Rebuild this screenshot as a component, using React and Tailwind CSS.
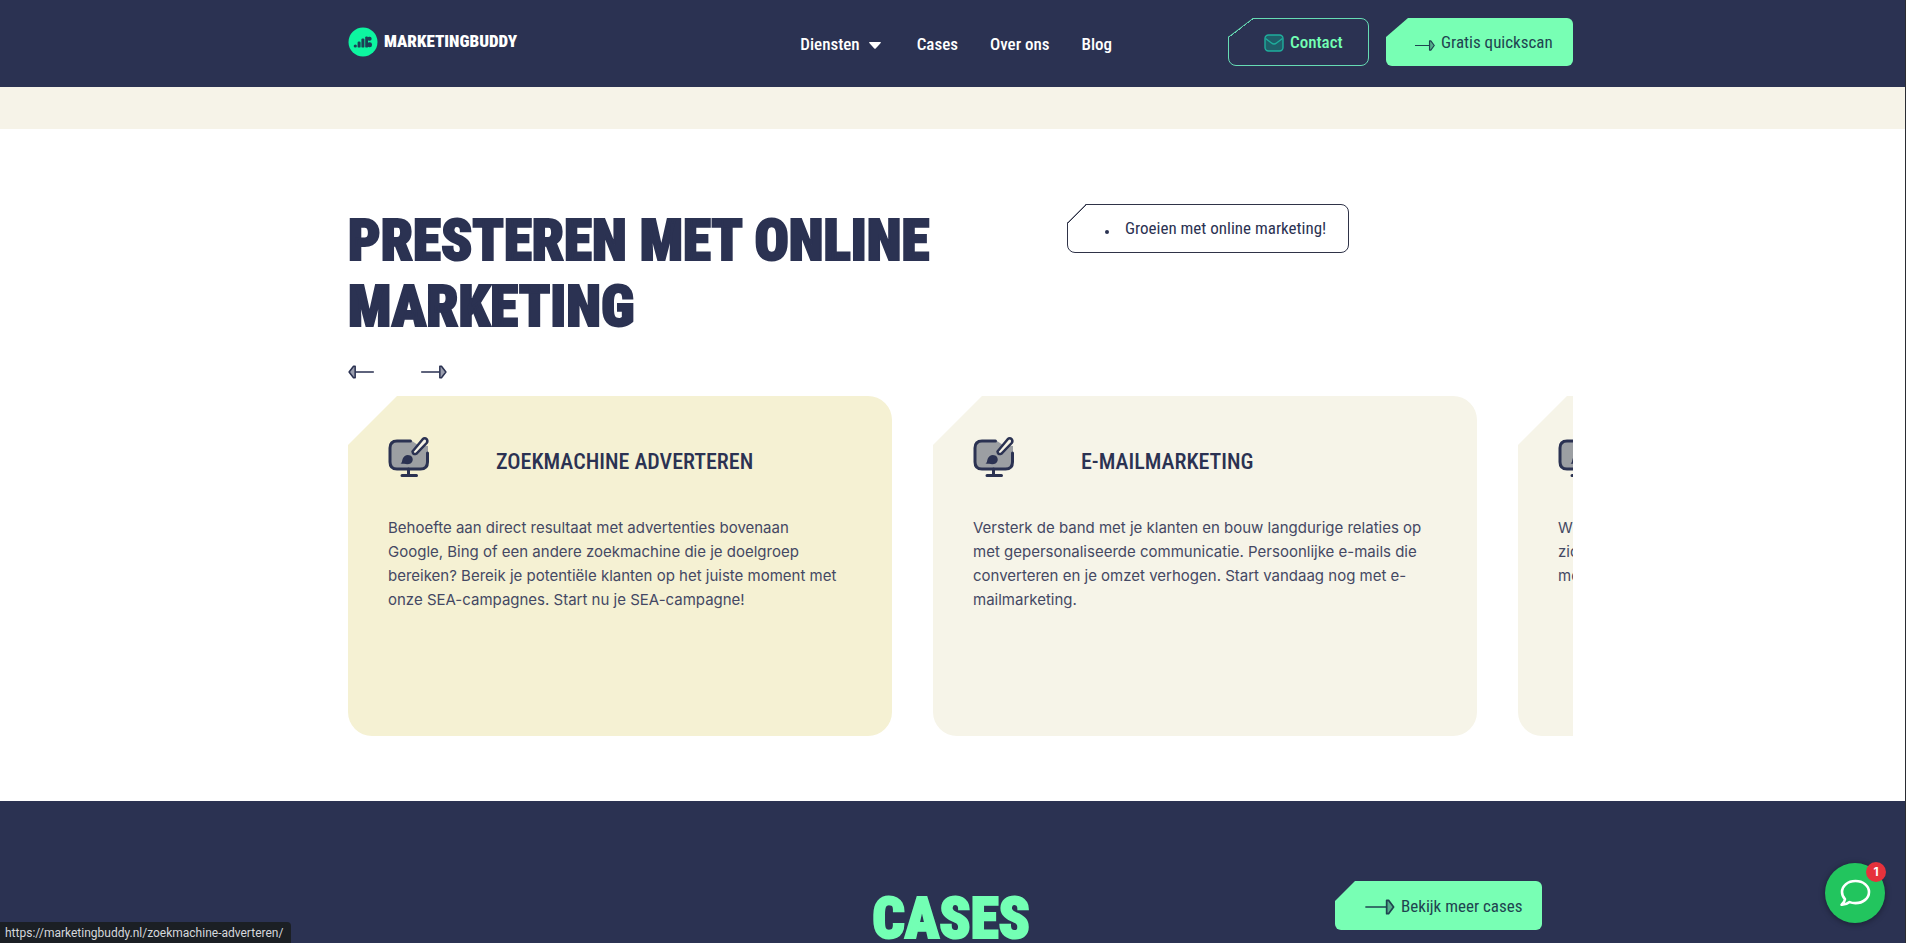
import React from "react";

const NAV = ["Cases", "Over ons", "Blog"];

const CARDS = [
  {
    title: "Zoekmachine adverteren",
    text: "Behoefte aan direct resultaat met advertenties bovenaan\nGoogle, Bing of een andere zoekmachine die je doelgroep\nbereiken? Bereik je potentiële klanten op het juiste moment met\nonze SEA-campagnes. Start nu je SEA-campagne!",
    href: "/zoekmachine-adverteren/",
    active: true,
  },
  {
    title: "E-mailmarketing",
    text: "Versterk de band met je klanten en bouw langdurige relaties op\nmet gepersonaliseerde communicatie. Persoonlijke e-mails die\nconverteren en je omzet verhogen. Start vandaag nog met e-\nmailmarketing.",
    href: "/e-mailmarketing/",
    active: false,
  },
  {
    title: "Webdesign",
    text: "Wij bouwen websites waarmee jouw bedrijf goed\nzichtbaar is en bezoekers klant worden,\nmet meetbaar resultaat.",
    href: "/webdesign/",
    active: false,
  },
];

function Container({ className = "", children }) {
  return (
    <div className="pl-4">
      <div className={"mx-auto w-full max-w-[1225px] " + className}>{children}</div>
    </div>
  );
}

function Arrow({ className = "", fill = "#9a9eae" }) {
  return (
    <svg viewBox="0 0 22 12" className={className} fill="none" stroke="currentColor" strokeWidth="1.3" strokeLinejoin="round" aria-hidden="true">
      <path d="M0 6h16" />
      <path d="M16 1v10h1.400l3.800-5-3.800-5z" fill={fill} />
    </svg>
  );
}

function LogoMark() {
  return (
    <svg viewBox="0 0 30 30" className="size-[30px]" aria-hidden="true">
      <circle cx="15" cy="15" r="14.5" fill="#0df5a0" />
      <g fill="#1c3f55">
        <circle cx="7.3" cy="19" r="1.6" />
        <rect x="9.6" y="14.6" width="3" height="6" rx="1.2" />
        <rect x="13.4" y="11.4" width="3" height="9.2" rx="1.2" />
        <rect x="17.2" y="9.4" width="2.8" height="11.2" rx="1.2" />
        <rect x="19.2" y="9.8" width="4.4" height="4" rx="1.8" />
        <rect x="19.2" y="15.2" width="4.8" height="5" rx="2.2" />
      </g>
    </svg>
  );
}

function MailIcon() {
  return (
    <svg viewBox="0 0 20 18" className="h-[18px] w-5" fill="none" stroke="#1fae9d" strokeWidth="1.4" aria-hidden="true">
      <rect x="1" y="1" width="18" height="16" rx="3.5" fill="#1f5f69" />
      <path d="M1.5 4.5 7.5 9a4 4 0 0 0 5 0l6-4.5" />
    </svg>
  );
}

function MonitorBrush() {
  return (
    <svg viewBox="0 0 42 42" className="size-[42px] shrink-0" fill="none" stroke="#2b3252" strokeWidth="3" strokeLinecap="round" strokeLinejoin="round" aria-hidden="true">
      <path d="M24 5H8.5Q2 5 2 11.5v14Q2 33 8.5 33h25q6.500 0 6.500-7.500V10L30 9z" fill="#9c9fa3" stroke="none" />
      <path d="M22.500 5H9Q2 5 2 12v14q0 7 7 7h23.500q7 0 7-7V17" />
      <path d="M20.500 33v6.500M14 39.500h14.500" />
      <path d="M24.500 15.500 34.700 3.200q2-2 4 0 1.400 1.800 0 3.800L28.500 17.600q-3.500 1.500-4-2.100z" fill="#f6f3e6" strokeWidth="2.500" />
      <path d="M12.500 27.500c1.700-.6 1.400-2.500 2.200-4.700 1.300-3.500 4.800-4.700 7.600-3.200 3.400 2 3.100 6.100.2 7.900-1.800 1-4.800.7-10 0z" fill="#2b3252" stroke="none" />
    </svg>
  );
}

function ServiceCard({ card }) {
  return (
    <article
      className={
        "h-[340px] w-[544px] shrink-0 rounded-3xl pl-10 pr-5 pt-10 [clip-path:polygon(49px_0,100%_0,100%_100%,0_100%,0_49px)] " +
        (card.active ? "bg-[#f5f1d3]" : "bg-[#f6f4e8]")
      }
    >
      <a href={card.href} className="block">
        <div className="flex h-[52px] items-start">
          <MonitorBrush />
          <h3 className="ml-[66px] mt-[10px] font-['Roboto_Condensed','Roboto',sans-serif] text-[22px] font-medium uppercase leading-8 text-[#2b3252]">
            {card.title}
          </h3>
        </div>
        <p className="mt-7 whitespace-pre-line font-['Inter',sans-serif] text-[15px] leading-6 text-[#444863]">{card.text}</p>
      </a>
    </article>
  );
}

export default function App() {
  return (
    <div className="relative h-screen overflow-hidden border-r border-[#2b2d33] bg-white font-['Roboto_Condensed','Roboto',sans-serif] text-[#2b3252]">
      <header className="bg-[#2b3252]">
        <Container className="flex h-[87px] items-center pb-[3px]">
          <a href="/" className="flex items-center gap-[6px] text-[17px] font-black text-white">
            <LogoMark />
            MARKETINGBUDDY
          </a>
          <nav className="ml-auto mr-[116px] flex items-center gap-8 pt-1.5 text-[17px] font-medium text-white">
            <a href="/diensten/" className="flex items-center gap-[9px] pr-1">
              Diensten
              <svg viewBox="0 0 12 7" className="h-[7px] w-3" fill="currentColor" aria-hidden="true">
                <path d="M.6 0h10.800q.8.300.3 1L6.700 6.500q-.7.600-1.400 0L.3 1Q-.2.300.6 0z" />
              </svg>
            </a>
            {NAV.map((item) => (
              <a key={item} href={"/" + item.toLowerCase().replace(" ", "-") + "/"}>
                {item}
              </a>
            ))}
          </nav>
          <div className="flex gap-[17px] text-[17px]">
            <a
              href="/contact/"
              className="relative flex h-12 w-[141px] items-center gap-1.5 rounded-lg border border-[#66dcb4] pl-[35px] pt-0.5 font-medium text-[#73ffb4] [clip-path:polygon(25px_0,100%_0,100%_100%,0_100%,0_19px)] before:absolute before:-left-px before:-top-px before:h-[19px] before:w-[25px] before:bg-[linear-gradient(to_bottom_right,transparent_calc(50%-1px),#66dcb4_calc(50%-1px),#66dcb4_calc(50%+1px),transparent_calc(50%+1px))]"
            >
              <MailIcon />
              Contact
            </a>
            <a
              href="/quickscan/"
              className="flex h-12 w-[187px] items-center gap-1.5 rounded-md bg-[#78ffb4] pl-[29px] pt-0.5 text-[#1f4450] [clip-path:polygon(22px_0,100%_0,100%_100%,0_100%,0_19px)]"
            >
              <Arrow className="mt-1 h-[11px] w-5" fill="#54ad8a" />
              Gratis quickscan
            </a>
          </div>
        </Container>
      </header>

      <div className="h-[42px] bg-[#f6f3e8]" />

      <main>
        <Container>
          <section className="h-[672px] pt-[75px]">
            <div className="flex items-start">
              <h1 className="w-[719px] pt-1 text-[57px] font-black uppercase leading-[66px] [-webkit-text-stroke:2px_#2b3252]">
                Presteren met online
                <br />
                marketing
              </h1>
              <ul className="relative flex h-[49px] w-[282px] items-center rounded-lg border border-[#2f3348] pl-[37px] text-[17px] [clip-path:polygon(19px_0,100%_0,100%_100%,0_100%,0_19px)] before:absolute before:-left-px before:-top-px before:h-[19px] before:w-[19px] before:bg-[linear-gradient(to_bottom_right,transparent_calc(50%-1px),#2f3348_calc(50%-1px),#2f3348_calc(50%+1px),transparent_calc(50%+1px))]">
                <li className="flex items-center gap-4">
                  <span className="mt-1.5 size-1 rounded-full bg-[#2b3252]" />
                  Groeien met online marketing!
                </li>
              </ul>
            </div>
            <div className="mt-5 flex gap-[47px]">
              <button type="button" aria-label="Vorige" className="flex h-6 items-center">
                <Arrow className="h-[14px] w-[26px] rotate-180" />
              </button>
              <button type="button" aria-label="Volgende" className="flex h-6 items-center">
                <Arrow className="h-[14px] w-[26px]" />
              </button>
            </div>
            <div className="mt-3 flex gap-[41px] overflow-hidden">
              {CARDS.map((card) => (
                <ServiceCard key={card.title} card={card} />
              ))}
            </div>
          </section>
        </Container>

        <section className="h-[142px] bg-[#2b3252]">
          <Container className="flex items-start justify-end pr-[31px] pt-20">
            <h2 className="mr-[305px] mt-[10px] text-[57px] font-black uppercase leading-[56px] text-[#73ffb4] [-webkit-text-stroke:2px_#73ffb4]">
              Cases
            </h2>
            <a
              href="/cases/"
              className="flex h-[49px] w-[207px] items-center gap-1.5 rounded-md bg-[#78ffb4] pl-[30px] pt-0.5 text-[17px] text-[#1f4450] [clip-path:polygon(20px_0,100%_0,100%_100%,0_100%,0_20px)]"
            >
              <Arrow className="h-4 w-[30px]" fill="#54ad8a" />
              Bekijk meer cases
            </a>
          </Container>
        </section>
      </main>

      <button
        type="button"
        aria-label="Chat"
        className="absolute bottom-5 right-5 flex size-[60px] items-center justify-center rounded-full bg-[#22c55e] shadow-[0_1px_6px_rgba(0,0,0,0.4)]"
      >
        <svg viewBox="0 0 32 28" className="h-7 w-8" fill="none" stroke="white" strokeWidth="2.600" strokeLinejoin="round" aria-hidden="true">
          <path d="M16.500 2C8.800 2 3 6.800 3 13c0 2.800 1.100 5.200 3 7.100-.3 2.400-1.700 4.200-3.400 5.700 3.200.1 6-1 8-2.700 1.800.7 3.800 1 5.900 1C24.200 24.100 30 19.200 30 13S24.200 2 16.500 2z" />
        </svg>
        <span className="absolute -right-px -top-px flex size-5 items-center justify-center rounded-full bg-[#e6323c] font-['Inter',sans-serif] text-xs font-bold text-white">
          1
        </span>
      </button>

      <div className="absolute bottom-0 left-0 h-[21px] rounded-tr bg-[#1b1f24] pl-[5px] pr-2 font-['Roboto',sans-serif] text-xs leading-[22px] text-[#d5d8dc]">
        https://marketingbuddy.nl/zoekmachine-adverteren/
      </div>
    </div>
  );
}
